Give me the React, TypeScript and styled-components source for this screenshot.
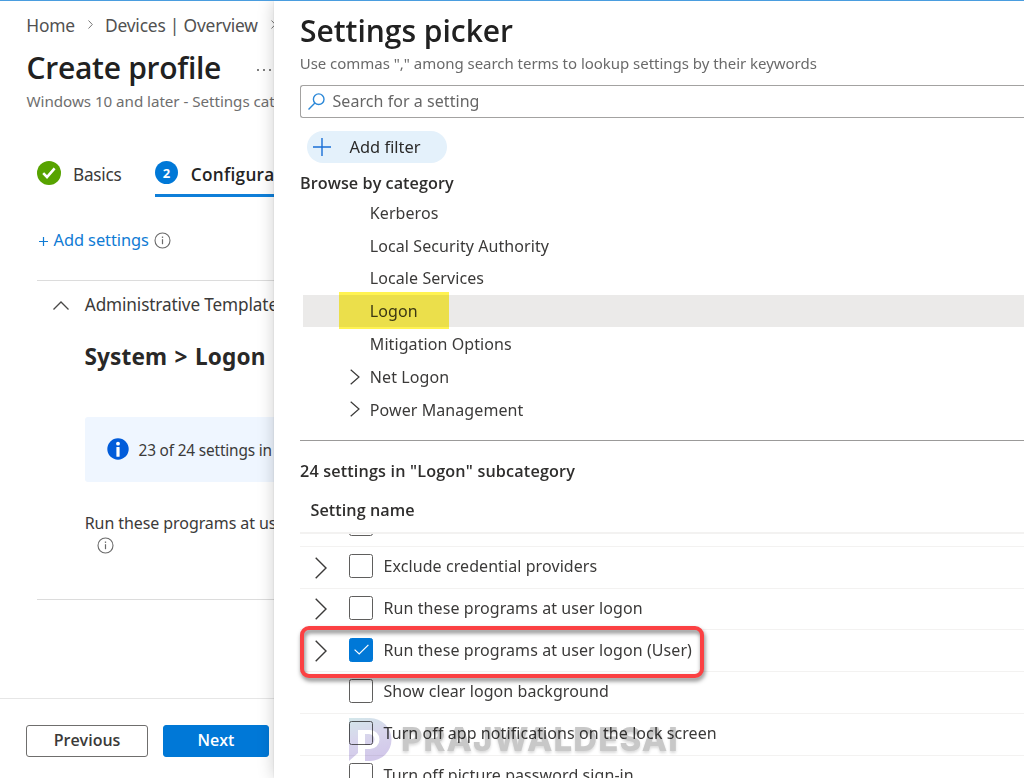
import React from 'react';
import styled, { createGlobalStyle, css } from 'styled-components';

const GlobalStyle = createGlobalStyle`
  *, *::before, *::after { box-sizing: border-box; }
  body { margin: 0; background: #fff; overflow: hidden; }
  #root { font-family: "Noto Sans", "Open Sans", sans-serif; color: #3b3a39; }
  svg { display: block; flex: none; }
`;

const semibold = css`
  font-family: "Open Sans", "Noto Sans", sans-serif;
  font-weight: 600;
`;

const Page = styled.div`
  display: flex;
  width: 1024px;
  height: 778px;
  overflow: hidden;
  border-top: 1px solid #4a9ddf;
`;

/* ---------- Left: profile wizard ---------- */

const Wizard = styled.main`
  display: flex;
  flex-direction: column;
  width: 273.5px;
  flex: none;
  overflow: hidden;
  white-space: nowrap;
`;

const Breadcrumb = styled.nav`
  display: flex;
  align-items: center;
  margin: 12px 0 0 26.3px;
  font-size: 17.4px;
  line-height: 24px;
  letter-spacing: -0.2px;
  color: #515151;
`;

const Crumb = styled.span`
  margin-right: 13px;
`;

const CrumbArrow = styled.svg`
  margin: 0 12px 2px 0;
`;

const TitleRow = styled.div`
  display: flex;
  align-items: center;
  margin: 11px 0 0 26.5px;
`;

const Title = styled.h1`
  ${semibold}
  margin: 0;
  font-size: 30px;
  line-height: 40px;
  letter-spacing: ${(p: { $tight?: boolean }) => (p.$tight ? '-0.27px' : '-0.02px')};
  color: #212121;
`;

const MoreDots = styled.svg`
  margin: 4px 0 0 35px;
`;

const Subtitle = styled.p`
  margin: 3px 0 0 26.5px;
  font-size: 15.2px;
  line-height: 20px;
  letter-spacing: -0.05px;
  color: #6e6e6e;
`;

const Steps = styled.div`
  display: flex;
  margin: 52px 0 0 37px;
`;

const Step = styled.div<{ $active?: boolean }>`
  display: flex;
  flex: none;
  height: 34px;
  font-size: 17.2px;
  line-height: 24px;
  letter-spacing: -0.25px;
  border-bottom: 3px solid ${p => (p.$active ? '#0f7fd9' : 'transparent')};
  margin-right: 33.5px;
  ${p => p.$active && css`
    ${semibold}
    letter-spacing: 0.3px;
    color: #242424;
  `}
`;

const StepBadge = styled.span<{ $color: string; $size: number }>`
  display: flex;
  align-items: center;
  justify-content: center;
  width: ${p => p.$size}px;
  height: ${p => p.$size}px;
  margin: -2px 12px 0 0;
  border-radius: 50%;
  background: ${p => p.$color};
  color: #fff;
  font: 700 13px "Open Sans", sans-serif;
  letter-spacing: 0;
`;

const StepName = styled.span<{ $indent?: number }>`
  margin-left: ${p => p.$indent ?? 0}px;
`;

const AddSettings = styled.div`
  display: flex;
  align-items: center;
  margin: 31px 0 0 37.5px;
  font-size: 16.4px;
  line-height: 24px;
  letter-spacing: -0.07px;
  color: #0f7bd4;
`;

const AddPlus = styled.svg`
  margin: 2px 6px 0 1px;
`;

const AddInfo = styled.span`
  margin-left: 5.5px;
`;

const Section = styled.section`
  margin: 28px 0 0 37px;
  height: 320px;
  flex: none;
  border-top: 1px solid #dcdcdc;
  border-bottom: 1px solid #dcdcdc;
`;

const SectionHeader = styled.div`
  display: flex;
  align-items: center;
  margin-top: 12px;
  padding-left: 16px;
  font-size: 17.2px;
  line-height: 24px;
  letter-spacing: -0.13px;

  svg { margin-right: 15.8px; }
`;

const SectionBody = styled.div`
  padding-left: 48px;
`;

const PathHeading = styled.h2`
  margin: 24.5px 0 0 -0.5px;
  font-size: 22.6px;
  font-weight: 700;
  line-height: 30px;
  letter-spacing: 0.1px;
  word-spacing: 1.5px;
  color: #292827;
`;

const InfoBar = styled.div`
  display: flex;
  align-items: center;
  height: 65px;
  margin-top: 45.5px;
  padding-left: 21.5px;
  border-radius: 3px 0 0 3px;
  background: #eff6ff;
  font-size: 15.4px;
  line-height: 20px;
  letter-spacing: -0.17px;

  svg { margin: 0 10px 1px 0; }
`;

const InfoText = styled.span`
  padding-top: 2px;
`;

const SettingLabel = styled.div`
  margin: 29px 0 2px -0.3px;
  font-size: 16px;
  line-height: 24px;
  letter-spacing: -0.08px;
`;

const LabelInfo = styled.div`
  padding-left: 11.5px;
`;

const Footer = styled.footer`
  display: flex;
  gap: 15px;
  height: 80px;
  margin-top: auto;
  padding: 26px 0 0 26px;
  border-top: 1px solid #e6e6e6;
`;

const Button = styled.button<{ $primary?: boolean }>`
  ${semibold}
  flex: none;
  width: ${p => (p.$primary ? 106 : 122)}px;
  height: 32px;
  padding: 0 0 2px;
  border: 1px solid ${p => (p.$primary ? '#0078d4' : '#6f6e6d')};
  border-radius: 3px;
  background: ${p => (p.$primary ? '#0078d7' : '#fff')};
  color: ${p => (p.$primary ? '#fff' : '#3b3a39')};
  font-size: 16px;
  line-height: 28px;
`;

/* ---------- Right: settings picker ---------- */

const Picker = styled.aside`
  position: relative;
  display: flex;
  flex-direction: column;
  flex: 1;
  min-width: 0;
  padding: 10px 0 0 26.5px;
  background: #fff;
  box-shadow: 0 0 16px rgba(0, 0, 0, 0.2), 0 0 2px rgba(0, 0, 0, 0.1);
  clip-path: inset(0 0 0 -30px);
`;

const Hint = styled.p`
  margin: 2px 0 0 -0.3px;
  font-size: 15px;
  line-height: 20px;
  letter-spacing: -0.03px;
  color: #6a6a6a;
`;

const SearchBox = styled.div`
  display: flex;
  align-items: center;
  flex: none;
  height: 33px;
  margin-top: 12px;
  padding-left: 7px;
  border: 1px solid #a3a2a1;
  border-right: 0;
  border-radius: 3px 0 0 3px;
  color: #666;
  font-size: 16px;
  letter-spacing: 0.05px;

  svg { margin-right: 7.5px; }
`;

const FilterPill = styled.div`
  display: flex;
  align-items: center;
  flex: none;
  width: 140px;
  height: 32px;
  margin: 13px 0 0 6.5px;
  padding-left: 6px;
  border-radius: 16px;
  background: #e4f1fb;
  font-size: 16.4px;
  color: #2b2a29;

  svg { margin-right: 19px; }
`;

const RaisedText = styled.span`
  padding-bottom: 2px;
`;

const Heading = styled.h3<{ $top: number; $left?: number; $spacing?: number }>`
  ${semibold}
  margin: ${p => p.$top}px 0 0 ${p => p.$left ?? 0}px;
  font-size: 16.2px;
  line-height: 24px;
  letter-spacing: ${p => p.$spacing ?? 0.05}px;
  color: #2f2e2d;
`;

const Tree = styled.ul`
  flex: none;
  height: 223.5px;
  margin: 1.2px 0 0;
  padding: 0 0 0 2.5px;
  overflow: hidden;
  list-style: none;
`;

const TreeItem = styled.li<{ $selected?: boolean }>`
  position: relative;
  display: flex;
  align-items: center;
  height: 32.9px;
  padding-left: 46px;
  font-size: 16px;
  letter-spacing: 0.08px;
  ${p => p.$selected && css`background: linear-gradient(#ebeae9, #ebeae9) top / 100% 32px no-repeat;`}
`;

const TreeArrow = styled.span`
  width: 21.3px;

  svg { margin: -1px 0 0 1px; }
`;

const Marker = styled.span`
  position: absolute;
  left: 36.5px;
  top: -3px;
  width: 110px;
  height: 37px;
  background: #fff352;
  mix-blend-mode: multiply;
`;

const Rule = styled.hr`
  flex: none;
  width: 100%;
  height: 1px;
  margin: 20px 0 0;
  border: 0;
  background: #9b9a99;
`;

const SettingList = styled.div`
  flex: 1;
  min-height: 0;
  margin-top: 10px;
  overflow: hidden;
  border-top: 2px solid #f3f2f1;
`;

const SettingRow = styled.div<{ $scrolled?: boolean }>`
  position: relative;
  display: flex;
  align-items: center;
  height: 41.8px;
  margin-top: ${p => (p.$scrolled ? -28.6 : 0)}px;
  padding-bottom: 2.5px;
  border-bottom: 1px solid #f3f2f1;
  font-size: 16px;
  letter-spacing: 0.08px;
`;

const RowArrow = styled.span`
  width: 49px;
  padding: 3px 0 0 15px;
`;

const CheckBox = styled.span<{ $checked?: boolean }>`
  display: flex;
  align-items: center;
  justify-content: center;
  width: 24px;
  height: 24px;
  margin-right: 10.5px;
  border: 1px solid ${p => (p.$checked ? '#0078d7' : '#5f5e5d')};
  border-radius: 2.5px;
  background: ${p => (p.$checked ? '#0078d7' : 'transparent')};
`;

const Callout = styled.div`
  position: absolute;
  left: 26.5px;
  top: 625px;
  width: 404px;
  height: 52px;
  border: 4px solid #fb4143;
  border-radius: 9px;
  filter: drop-shadow(1px 3px 2px rgba(0, 0, 0, 0.5));
`;

const Watermark = styled.div`
  position: absolute;
  left: 75.5px;
  top: 717px;
  display: flex;
  align-items: center;
  mix-blend-mode: multiply;
`;

const WatermarkText = styled.span`
  margin: 0 0 1px 9px;
  font: 800 33px/43px Inter, "Liberation Sans", sans-serif;
  letter-spacing: 1.1px;
  color: #c8c8c8;
  text-shadow: 0 2px 3px rgba(0, 0, 0, 0.15);
`;

/* ---------- Icons ---------- */

const Chevron = ({ w, h, stroke = 1.4, color = '#3b3a39' }: { w: number; h: number; stroke?: number; color?: string }) => (
  <svg width={w} height={h} viewBox={`0 0 ${w} ${h}`} fill="none" stroke={color} strokeWidth={stroke}>
    <path d={`M.7 .7 L${w - 1} ${h / 2} L.7 ${h - 0.7}`} />
  </svg>
);

const InfoOutline = () => (
  <svg width="17" height="17" viewBox="0 0 17 17" fill="none" stroke="#6a6a6a">
    <circle cx="8.5" cy="8.5" r="7.500" strokeWidth="1.1" />
    <path d="M8.5 7.2v5" strokeWidth="1.2" />
    <path d="M8.5 4.5v1.4" strokeWidth="1.3" />
  </svg>
);

const InfoSolid = () => (
  <svg width="22" height="22" viewBox="0 0 22 22">
    <circle cx="11" cy="11" r="10.700" fill="#015cda" />
    <circle cx="11" cy="5.700" r="1.900" fill="#fff" />
    <rect x="9.400" y="9" width="3.200" height="9.800" rx=".6" fill="#fff" />
  </svg>
);

const categories: { name: string; expandable?: boolean; selected?: boolean }[] = [
  { name: 'Kerberos' },
  { name: 'Local Security Authority' },
  { name: 'Locale Services' },
  { name: 'Logon', selected: true },
  { name: 'Mitigation Options' },
  { name: 'Net Logon', expandable: true },
  { name: 'Power Management', expandable: true },
];

const settings: { name: string; expandable?: boolean; checked?: boolean }[] = [
  { name: 'Exclude credential providers', expandable: true },
  { name: 'Run these programs at user logon', expandable: true },
  { name: 'Run these programs at user logon (User)', expandable: true, checked: true },
  { name: 'Show clear logon background' },
  { name: 'Turn off app notifications on the lock screen' },
  { name: 'Turn off picture password sign-in' },
];

export default function App() {
  return (
    <>
      <GlobalStyle />
      <Page>
        <Wizard>
          <Breadcrumb>
            <Crumb>Home</Crumb>
            <CrumbArrow width="5" height="9" viewBox="0 0 5 9" fill="none" stroke="#777"><path d="M.5 .5 4.3 4.5 .5 8.5" /></CrumbArrow>
            <Crumb>Devices | Overview</Crumb>
            <CrumbArrow width="5" height="9" viewBox="0 0 5 9" fill="none" stroke="#777"><path d="M.5 .5 4.3 4.5 .5 8.5" /></CrumbArrow>
          </Breadcrumb>
          <TitleRow>
            <Title $tight>Create profile</Title>
            <MoreDots width="16" height="4" viewBox="0 0 16 4" fill="#555">
              <circle cx="2" cy="2" r="1" /><circle cx="8" cy="2" r="1" /><circle cx="14" cy="2" r="1" />
            </MoreDots>
          </TitleRow>
          <Subtitle>Windows 10 and later - Settings catalog</Subtitle>

          <Steps>
            <Step>
              <StepBadge $color="#57a300" $size={24}>
                <svg width="14" height="12" viewBox="0 0 14 12" fill="none" stroke="#fff" strokeWidth="2.6"><path d="M1.2 6.2 5 10 12.6 1.4" /></svg>
              </StepBadge>
              <StepName>Basics</StepName>
            </Step>
            <Step $active>
              <StepBadge $color="#0078d7" $size={23}>2</StepBadge>
              <StepName $indent={0.8}>Configuration settings</StepName>
            </Step>
          </Steps>

          <AddSettings>
            <AddPlus width="9" height="9" viewBox="0 0 9 9" stroke="#0f7bd4" strokeWidth="1.2"><path d="M4.5 0v9M0 4.5h9" /></AddPlus>
            Add settings
            <AddInfo><InfoOutline /></AddInfo>
          </AddSettings>

          <Section>
            <SectionHeader>
              <svg width="16" height="9" viewBox="0 0 16 9" fill="none" stroke="#484746" strokeWidth="1.3"><path d="M.5 8.5 8 1l7.500 7.500" /></svg>
              Administrative Templates
            </SectionHeader>
            <SectionBody>
              <PathHeading>System &gt; Logon</PathHeading>
              <InfoBar>
                <InfoSolid />
                <InfoText>23 of 24 settings in this subcategory</InfoText>
              </InfoBar>
              <SettingLabel>Run these programs at user logon</SettingLabel>
              <LabelInfo><InfoOutline /></LabelInfo>
            </SectionBody>
          </Section>

          <Footer>
            <Button>Previous</Button>
            <Button $primary>Next</Button>
          </Footer>
        </Wizard>

        <Picker>
          <Title>Settings picker</Title>
          <Hint>Use commas "," among search terms to lookup settings by their keywords</Hint>
          <SearchBox>
            <svg width="17" height="17" viewBox="0 0 17 17" fill="none" stroke="#2b88d8" strokeWidth="1.4">
              <circle cx="10.700" cy="6.200" r="5.300" /><path d="M6.900 10 .5 16.400" />
            </svg>
            <RaisedText>Search for a setting</RaisedText>
          </SearchBox>
          <FilterPill>
            <svg width="18" height="18" viewBox="0 0 18 18" stroke="#1a6fd6" strokeWidth="1.4"><path d="M9 0v18M0 9h18" /></svg>
            <RaisedText>Add filter</RaisedText>
          </FilterPill>
          <Heading $top={8}>Browse by category</Heading>
          <Tree>
            {categories.map(c => (
              <TreeItem key={c.name} $selected={c.selected}>
                <TreeArrow>{c.expandable && <Chevron w={10} h={16} stroke={1.2} />}</TreeArrow>
                {c.name}
                {c.selected && <Marker />}
              </TreeItem>
            ))}
          </Tree>
          <Rule />
          <Heading $top={18} $spacing={0.16}>24 settings in "Logon" subcategory</Heading>
          <Heading $top={15} $left={10.5}>Setting name</Heading>
          <SettingList>
            <SettingRow $scrolled>
              <RowArrow />
              <CheckBox />
            </SettingRow>
            {settings.map(s => (
              <SettingRow key={s.name}>
                <RowArrow>{s.expandable && <Chevron w={12} h={22} />}</RowArrow>
                <CheckBox $checked={s.checked}>
                  {s.checked && (
                    <svg width="15" height="11" viewBox="0 0 15 11" fill="none" stroke="#fff" strokeWidth="1.2"><path d="M.6 5.600 5.200 10 14.400.8" /></svg>
                  )}
                </CheckBox>
                {s.name}
              </SettingRow>
            ))}
          </SettingList>
          <Callout />
          <Watermark>
            <svg width="43" height="44" viewBox="0 0 43 44">
              <defs>
                <linearGradient id="mark" x1="0" y1="0" x2="0.3" y2="1">
                  <stop offset="0" stopColor="#d3e7ea" />
                  <stop offset="0.5" stopColor="#d8d5ec" />
                  <stop offset="1" stopColor="#d2c8ea" />
                </linearGradient>
              </defs>
              <path fill="url(#mark)" fillRule="evenodd" d="M0 0H21A21.500 21.500 0 0 1 21 43H16V31H21A9.500 9.500 0 0 0 21 12H9V35L0 43Z M16 16H20A5.500 5.500 0 0 1 20 27H16Z" />
            </svg>
            <WatermarkText>PRAJWALDESAI</WatermarkText>
          </Watermark>
        </Picker>
      </Page>
    </>
  );
}
